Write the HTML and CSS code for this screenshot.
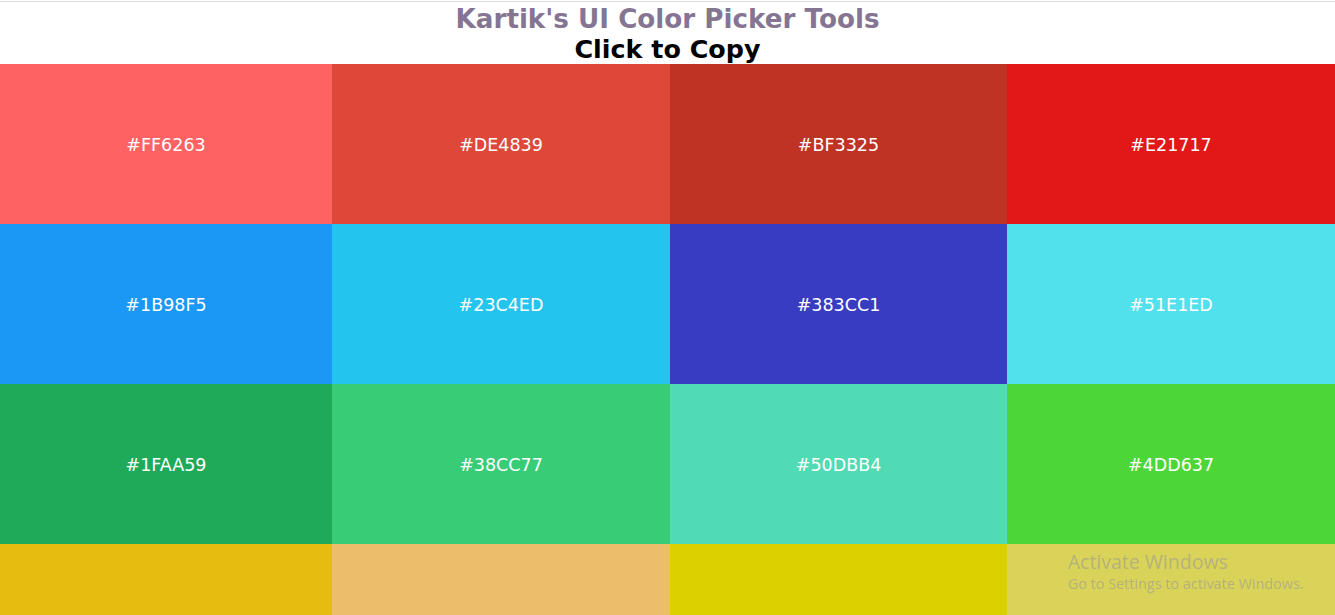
FILE: index.html
```html
<!DOCTYPE html>
<html>
<head>
<meta charset="utf-8">
<link rel="stylesheet" href="styles.css">
</head>
<body>
<header class="head">
  <h1 class="title">Kartik's UI Color Picker Tools</h1>
  <h2 class="sub">Click to Copy</h2>
</header>
<main class="grid">
  <div class="cell c1">#FF6263</div>
  <div class="cell c2">#DE4839</div>
  <div class="cell c3">#BF3325</div>
  <div class="cell c4">#E21717</div>
  <div class="cell c5">#1B98F5</div>
  <div class="cell c6">#23C4ED</div>
  <div class="cell c7">#383CC1</div>
  <div class="cell c8">#51E1ED</div>
  <div class="cell c9">#1FAA59</div>
  <div class="cell c10">#38CC77</div>
  <div class="cell c11">#50DBB4</div>
  <div class="cell c12">#4DD637</div>
  <div class="cell c13"></div>
  <div class="cell c14"></div>
  <div class="cell c15"></div>
  <div class="cell c16"></div>
</main>
<div class="watermark">
  <div class="wm1">Activate Windows</div>
  <div class="wm2">Go to Settings to activate Windows.</div>
</div>
</body>
</html>
```
FILE: styles.css
```css
html, body {
  margin: 0;
  padding: 0;
  background: #fff;
}
body {
  border-top: 1px solid #fff;
  overflow: hidden;
  font-family: "DejaVu Sans", Verdana, sans-serif;
}
.head {
  border-top: 1px solid #dcdcdc;
  text-align: center;
  height: 62px;
  display: flex;
  flex-direction: column;
  align-items: center;
}
.title {
  margin: 2px 0 0;
  font-size: 26.2px;
  line-height: 30px;
  font-weight: bold;
  color: #857592;
}
.sub {
  margin: 0;
  font-size: 25.4px;
  line-height: 30px;
  font-weight: bold;
  color: #000;
}
.grid {
  display: grid;
  grid-template-columns: 332fr 338fr 337fr 328fr;
  grid-auto-rows: 160px;
}
.cell {
  display: flex;
  align-items: center;
  justify-content: center;
  padding-top: 2px;
  color: #fff;
  font-size: 17.5px;
}
.c1 { background: #FF6263; }
.c2 { background: #DE4839; }
.c3 { background: #BF3325; }
.c4 { background: #E21717; }
.c5 { background: #1B98F5; }
.c6 { background: #23C4ED; }
.c7 { background: #383CC1; }
.c8 { background: #51E1ED; }
.c9 { background: #1FAA59; }
.c10 { background: #38CC77; }
.c11 { background: #50DBB4; }
.c12 { background: #4DD637; }
.c13 { background: #E7BC11; }
.c14 { background: #EDBE6A; }
.c15 { background: #DCD100; }
.c16 { background: #D9D35A; }
.watermark {
  position: fixed;
  left: 1068px;
  top: 549px;
  color: rgba(150, 150, 150, 0.55);
  font-family: "Open Sans", "Noto Sans", sans-serif;
  pointer-events: none;
}
.wm1 {
  font-size: 19.5px;
  line-height: 25px;
}
.wm2 {
  font-size: 14.4px;
  line-height: 20px;
}
```
